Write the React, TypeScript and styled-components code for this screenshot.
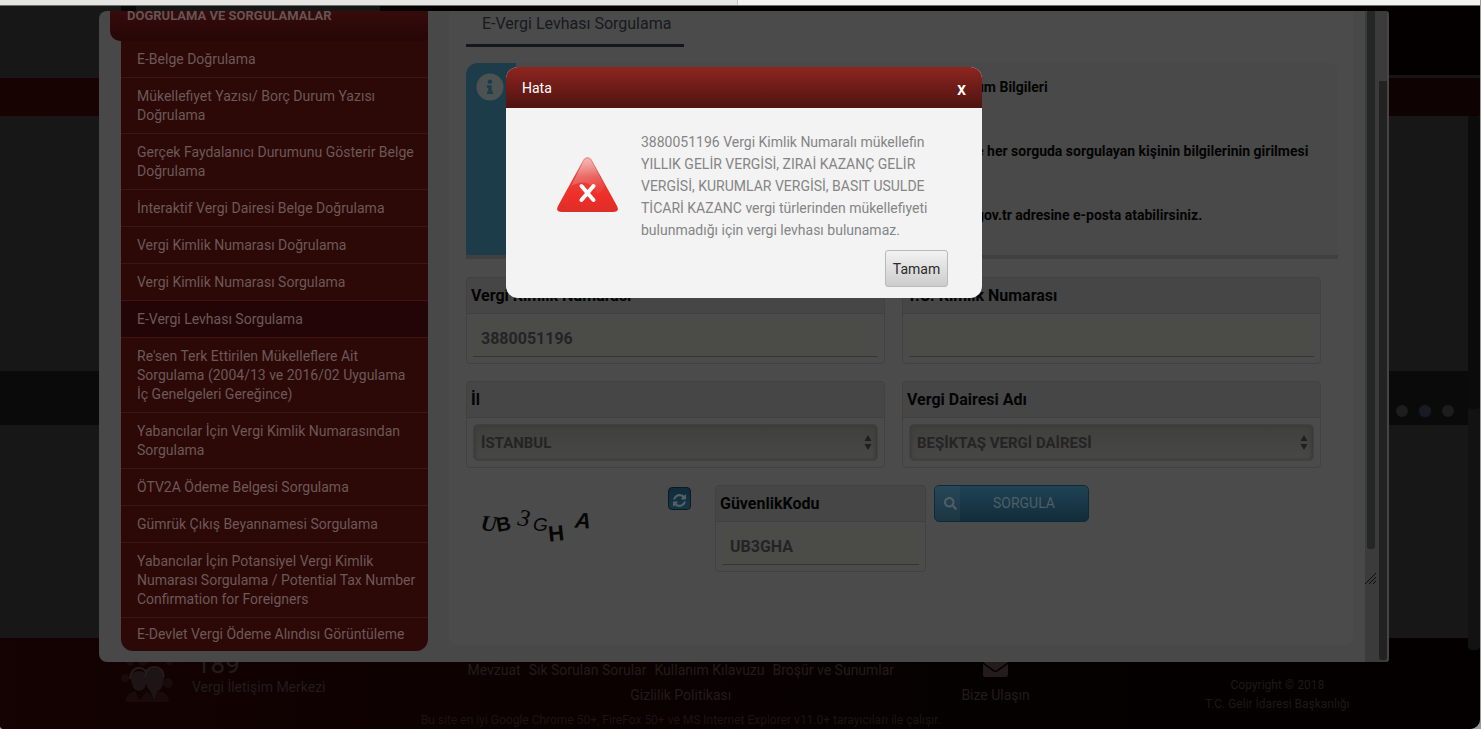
import React from "react";
import styled, { createGlobalStyle, css } from "styled-components";
import { FaEnvelope, FaInfoCircle, FaSearch } from "react-icons/fa";

const GlobalStyle = createGlobalStyle`
  *, *::before, *::after { box-sizing: border-box; }
  body {
    margin: 0;
    background: #9a9a9a;
    font-family: Roboto, "Liberation Sans", sans-serif;
    font-size: 14px;
    color: #000;
  }
  button, input, select { font-family: inherit; }
  h1, h2, p, ul { margin: 0; padding: 0; }
`;

const Page = styled.div`
  position: relative;
  display: flex;
  flex-direction: column;
  min-height: 100vh;
  margin-right: 1px;
  background: #171717;
  border-radius: 0 0 10px 4px;
  overflow: hidden;
`;

/* ---------- site behind the window ---------- */

const BrowserStrip = styled.div`
  display: grid;
  grid-template-columns: 738px 1fr;
  height: 6px;
  flex: none;
  background: #f2f3f0;
  border-bottom: 1px solid #6f6f6d;
`;

const InactiveTab = styled.div`
  background: #e5e5e3;
  border-right: 1px solid #c4c4c2;
`;

const SiteHeader = styled.header`
  display: grid;
  grid-template-columns: 121px 15px 244px 1fr;
  height: 72px;
  flex: none;
`;

const HeaderGap = styled.div`
  background: #070707;
`;

const HeaderLogo = styled.div`
  background: #141716;
`;

const HeaderBar = styled.div`
  background: #050000;
  border-bottom: 3px solid #161414;
`;

const NavBand = styled.div`
  height: 38px;
  flex: none;
  background: linear-gradient(90deg, #180303, #0e0202);
`;

const Hero = styled.div`
  height: 255px;
  flex: none;
`;

const SliderBand = styled.div`
  display: flex;
  justify-content: flex-end;
  align-items: flex-start;
  gap: 11px;
  height: 54px;
  flex: none;
  margin-right: 12px;
  padding: 34px 14px 0 0;
  background: #0a0a0a;
`;

const Dot = styled.span<{ $active?: boolean }>`
  width: 12px;
  height: 12px;
  border-radius: 50%;
  background: ${(p) => (p.$active ? "#1a1b20" : "#1d1d1d")};
  box-shadow: ${(p) => (p.$active ? "0 0 3px 1px #0e0f1c" : "none")};
`;

const Spacer = styled.div`
  flex: 1;
  min-height: 213px;
`;

const Footer = styled.footer`
  display: grid;
  grid-template-columns: 29% 34% 8% 1fr;
  height: 91px;
  flex: none;
  color: #231c1b;
  background: linear-gradient(90deg, #150202, #0c0101 35%, #060101 65%, #040000);
`;

const Contact = styled.div`
  display: flex;
  gap: 19px;
  padding: 14px 0 0 121px;
`;

const ContactNumber = styled.div`
  padding-left: 4px;
  font-size: 26px;
  line-height: 24px;
`;

const ContactName = styled.div`
  line-height: 22px;
`;

const FooterLinks = styled.nav`
  display: flex;
  flex-wrap: wrap;
  justify-content: center;
  align-content: flex-start;
  gap: 0 8px;
  padding-top: 20px;
  white-space: nowrap;
`;

const FooterLink = styled.a`
  color: inherit;
  font-size: 14px;
  line-height: 25px;
  text-decoration: none;
`;

const BrowserNote = styled.p`
  color: #1c1413;
  font-size: 12px;
  line-height: 25px;
`;

const Reach = styled.a`
  display: flex;
  flex-direction: column;
  align-items: center;
  gap: 7px;
  padding: 17px 0 0 8px;
  color: inherit;
  text-decoration: none;
`;

const Copyright = styled.div`
  padding: 38px 0 0 24px;
  font-size: 12px;
  line-height: 19px;
  text-align: center;
  color: #1e1817;
`;

const PageScroll = styled.div`
  position: absolute;
  top: 116px;
  right: 0;
  width: 12px;
  height: 534px;
  background: #121212;
  border-radius: 0 0 4px 4px;
`;

const PageThumb = styled.div`
  height: 293px;
  background: #0b0b0b;
  border-radius: 4px;
`;

/* ---------- application window ---------- */

const WindowLayer = styled.div`
  position: absolute;
  inset: 11px 91px auto 99px;
`;

const Window = styled.div`
  display: flex;
  height: 651px;
  background: #484848;
  border-radius: 8px 4px 4px 8px;
  overflow: hidden;
`;

const Sidebar = styled.aside`
  flex: none;
  width: 329px;
  padding-left: 11px;
`;

const SidebarTitle = styled.h2`
  height: 30px;
  padding-left: 17px;
  background: linear-gradient(#360b0b, #260606);
  border-bottom-left-radius: 10px;
  color: #675454;
  font-size: 13px;
  font-weight: 700;
  line-height: 9px;
`;

const Menu = styled.ul`
  margin-left: 11px;
  list-style: none;
  background: #2c0807;
  border-radius: 0 0 12px 12px;
  overflow: hidden;
`;

const MenuItem = styled.li<{ $active?: boolean }>`
  border-bottom: 1px solid #3d1515;
  background: ${(p) => (p.$active ? "#230507" : "transparent")};

  &:last-child {
    border-bottom: 0;
  }
`;

const MenuLink = styled.a`
  display: block;
  padding: 9px 12px 8px 16px;
  color: #6d5957;
  font-size: 14px;
  line-height: 19px;
  text-decoration: none;

  ${MenuItem}:last-child & {
    padding: 7px 12px 7px 16px;
  }
`;

const Main = styled.main`
  flex: 1;
  min-width: 0;
  margin: 0 12px 17px 21px;
  padding: 0 15px 0 17px;
  background: #4b4b4b;
  border-radius: 0 0 8px 8px;
`;

const Tab = styled.a`
  display: block;
  width: 218px;
  padding: 0 0 7px 16px;
  border-bottom: 3px solid #15171b;
  color: #17191e;
  font-size: 16px;
  line-height: 26px;
  text-decoration: none;
`;

const Info = styled.section`
  display: flex;
  margin-top: 16px;
  height: 196px;
  background: #494949;
  border-bottom: 4px solid #404040;
  border-radius: 12px 12px 0 0;
  overflow: hidden;
`;

const InfoMark = styled.div`
  flex: none;
  width: 50px;
  padding: 10px;
  background: #1d3c4a;
  color: #4c5152;
`;

const InfoText = styled.div`
  flex: 1;
  padding: 13px 0 0 calc(50% + 24px);
  font-size: 14px;
  font-weight: 700;
  line-height: 22px;
  color: #040404;
  white-space: nowrap;
`;

const InfoLine = styled.p`
  margin-bottom: 42px;
`;

const Form = styled.form`
  display: grid;
  grid-template-columns: 1fr 1fr;
  gap: 17px;
  padding: 18px 17px 0 0;
`;

const Field = styled.div`
  height: 87px;
  border: 1px solid #414141;
  border-radius: 4px;
  overflow: hidden;
`;

const FieldLabel = styled.label`
  display: block;
  height: 36px;
  padding-left: 4px;
  background: #464646;
  border-bottom: 1px solid #404040;
  color: #040404;
  font-size: 16px;
  font-weight: 700;
  line-height: 36px;
`;

const FieldBody = styled.div`
  position: relative;
  padding: 6px;
`;

const control = css`
  display: block;
  width: 100%;
  outline: 0;
  color: #242424;
  font-weight: 700;
`;

const TextInput = styled.input`
  ${control}
  height: 37px;
  padding: 0 8px;
  border: 0;
  border-bottom: 1px solid #353537;
  background: #4b4b48;
  font-size: 16px;
`;

const Select = styled.select`
  ${control}
  appearance: none;
  height: 37px;
  padding: 0 7px;
  border: 1px solid #414141;
  border-radius: 5px;
  background: linear-gradient(#3f3f3d, #484846);
  box-shadow: inset 2px 0 3px #3c3c3b, inset -2px 0 3px #3c3c3b;
  font-size: 15px;
`;

const SelectArrows = styled.svg`
  position: absolute;
  top: 17px;
  right: 12px;
  pointer-events: none;
`;

const SecurityRow = styled.div`
  grid-column: 1 / -1;
  display: flex;
  align-items: flex-start;
`;

const Captcha = styled.svg`
  flex: none;
  margin-right: 52px;
`;

const RefreshButton = styled.button`
  display: flex;
  align-items: center;
  justify-content: center;
  width: 23px;
  height: 23px;
  margin: 2px 24px 0 0;
  padding: 3px 0 0;
  border: 1px solid #0b1a22;
  border-radius: 4px;
  background: linear-gradient(#102b3a, #163646);
  color: #566065;
`;

const CodeField = styled(Field)`
  width: 211px;
  margin-right: 8px;
`;

const QueryButton = styled.button`
  display: grid;
  grid-template-columns: 25px 1fr;
  align-items: stretch;
  width: 155px;
  height: 37px;
  padding: 0;
  border: 1px solid #0e2a38;
  border-radius: 5px;
  background: linear-gradient(#1f4354, #122c3a);
  color: #4f5f66;
  font-size: 14px;
  overflow: hidden;
`;

const QueryIcon = styled.span`
  display: flex;
  align-items: center;
  justify-content: center;
  padding-left: 6px;
  background: linear-gradient(#264858, #1c3543);
`;

const QueryText = styled.span`
  line-height: 35px;
`;

const InnerTrack = styled.div`
  flex: none;
  display: flex;
  flex-direction: column;
  width: 14px;
  background: #3b3b3b;
`;

const InnerThumb = styled.div`
  width: 8px;
  height: 538px;
  margin-left: 2px;
  background: #252626;
  border-radius: 0 0 3px 3px;
`;

const ResizeGrip = styled.svg`
  margin-top: 24px;
`;

const OuterTrack = styled.div`
  flex: none;
  width: 10px;
  padding: 70px 0 2px;
  background: #3b3b3b;
  border-right: 2px solid #454545;
`;

const OuterThumb = styled.div`
  height: 100%;
  background: #222;
  border-radius: 0 0 3px 3px;
`;

/* ---------- error dialog ---------- */

const Dialog = styled.div`
  position: absolute;
  top: 56px;
  left: 50%;
  width: 476px;
  margin-left: -238px;
  background: #f3f3f3;
  border-radius: 12px;
  overflow: hidden;
`;

const DialogHeader = styled.div`
  display: flex;
  align-items: center;
  justify-content: space-between;
  height: 41px;
  padding: 0 16px;
  background: linear-gradient(#8e2520, #4e1310);
  color: #fff;
`;

const DialogTitle = styled.h1`
  font-size: 14px;
  font-weight: 400;
`;

const CloseButton = styled.button`
  padding: 2px 0 0;
  border: 0;
  background: none;
  color: #fff;
  font-size: 18px;
  font-weight: 500;
  line-height: 20px;
`;

const DialogBody = styled.div`
  display: grid;
  grid-template-columns: 63px 1fr;
  align-items: center;
  gap: 9px 22px;
  padding: 23px 34px 11px 50px;
`;

const Message = styled.p`
  color: #858585;
  font-size: 14px;
  line-height: 22px;
`;

const OkButton = styled.button`
  grid-column: 2;
  justify-self: end;
  width: 63px;
  height: 37px;
  padding: 0;
  border: 1px solid #b9b9b9;
  border-radius: 3px;
  background: linear-gradient(#f2f2f2, #cccccc);
  color: #2b2b2b;
  font-size: 14px;
`;

const menu = [
  "E-Belge Doğrulama",
  "Mükellefiyet Yazısı/ Borç Durum Yazısı Doğrulama",
  "Gerçek Faydalanıcı Durumunu Gösterir Belge Doğrulama",
  "İnteraktif Vergi Dairesi Belge Doğrulama",
  "Vergi Kimlik Numarası Doğrulama",
  "Vergi Kimlik Numarası Sorgulama",
  "E-Vergi Levhası Sorgulama",
  "Re'sen Terk Ettirilen Mükelleflere Ait Sorgulama (2004/13 ve 2016/02 Uygulama İç Genelgeleri Gereğince)",
  "Yabancılar İçin Vergi Kimlik Numarasından Sorgulama",
  "ÖTV2A Ödeme Belgesi Sorgulama",
  "Gümrük Çıkış Beyannamesi Sorgulama",
  "Yabancılar İçin Potansiyel Vergi Kimlik Numarası Sorgulama / Potential Tax Number Confirmation for Foreigners",
  "E-Devlet Vergi Ödeme Alındısı Görüntüleme",
];

const footerLinks = [
  "Mevzuat",
  "Sık Sorulan Sorular",
  "Kullanım Kılavuzu",
  "Broşür ve Sunumlar",
  "Gizlilik Politikası",
];

const PeopleIcon = () => (
  <svg width="52" height="51" viewBox="0 0 52 51" aria-hidden="true">
    <g fill="#1a0b0b">
      <circle cx="4" cy="26" r="4" />
      <circle cx="47" cy="31" r="5" />
      <circle cx="22" cy="9" r="5" />
      <circle cx="48" cy="10" r="3" />
      <circle cx="9" cy="11" r="3" />
      <path d="M4 50q1-9 10-11l5 9 7-9 7 9 5-9q10 2 10 11z" />
    </g>
    <g fill="#1d1515">
      <path d="M10 27q0-8 8-8t8 8q-1 12-8 12t-8-12z" />
      <path d="M24 26q0-10 9-10t10 10q-1 11-6 13l-4 9-4-9q-4-4-5-13z" />
    </g>
    <path d="M9 27q1-11 9-11 5 0 7 4M24 25q1-10 9-10 9 0 10 10" fill="none" stroke="#241b1b" strokeWidth="2" />
  </svg>
);

const RefreshIcon = () => (
  <svg width="13" height="13" viewBox="0 0 1536 1536" fill="currentColor" aria-hidden="true">
    <path d="M1511 928q0 5-1 7-64 268-268 434.500t-478 166.500q-146 0-282.500-55t-243.500-157l-129 129q-19 19-45 19t-45-19-19-45v-448q0-26 19-45t45-19h448q26 0 45 19t19 45-19 45l-137 137q71 66 161 102t187 36q134 0 250-65t186-179q11-17 53-117 8-23 30-23h192q13 0 22.500 9.500t9.500 22.500zm25-800v448q0 26-19 45t-45 19h-448q-26 0-45-19t-19-45 19-45l138-138q-148-137-349-137-134 0-250 65t-186 179q-11 17-53 117-8 23-30 23h-199q-13 0-22.500-9.500t-9.500-22.500v-7q65-268 270-434.500t480-166.500q146 0 284 55.500t245 156.500l130-129q19-19 45-19t45 19 19 45z" />
  </svg>
);

const ErrorIcon = () => (
  <svg width="63" height="60" viewBox="0 0 63 60" aria-hidden="true">
    <defs>
      <linearGradient id="tri" x1="0" y1="0" x2="0" y2="1">
        <stop offset="0" stopColor="#f0908c" />
        <stop offset="0.35" stopColor="#e5423e" />
        <stop offset="0.7" stopColor="#ef2f28" />
        <stop offset="1" stopColor="#dd2e29" />
      </linearGradient>
      <linearGradient id="gloss" x1="0" y1="0" x2="0.3" y2="1">
        <stop offset="0" stopColor="#fff" stopOpacity="0.45" />
        <stop offset="1" stopColor="#fff" stopOpacity="0.05" />
      </linearGradient>
    </defs>
    <path d="M27.500 3.500q4-5 8 0L61 50q3 6-4 6H6q-7 0-4-6z" fill="url(#tri)" />
    <path d="M28 4.500q3.500-4 7 0L49 30Q46 36 41 38 34 20 15 30z" fill="url(#gloss)" />
    <path d="M25.500 30l12 14M37.500 30l-12 14" stroke="#fff" strokeWidth="4" strokeLinecap="round" />
  </svg>
);

const Arrows = () => (
  <SelectArrows width="8" height="15" viewBox="0 0 8 15" aria-hidden="true">
    <path d="M0.500 6L4 0l3.500 6zM0.500 9h7L4 15z" fill="#1f1f1f" />
  </SelectArrows>
);

export default function App() {
  return (
    <>
      <GlobalStyle />
      <Page>
        <BrowserStrip>
          <InactiveTab />
        </BrowserStrip>
        <SiteHeader>
          <div />
          <HeaderGap />
          <HeaderLogo />
          <HeaderBar />
        </SiteHeader>
        <NavBand />
        <Hero />
        <SliderBand>
          <Dot />
          <Dot $active />
          <Dot />
        </SliderBand>
        <Spacer />
        <Footer>
          <Contact>
            <PeopleIcon />
            <div>
              <ContactNumber>189</ContactNumber>
              <ContactName>Vergi İletişim Merkezi</ContactName>
            </div>
          </Contact>
          <FooterLinks>
            {footerLinks.map((text) => (
              <FooterLink href="#" key={text}>
                {text}
              </FooterLink>
            ))}
            <BrowserNote>
              Bu site en iyi Google Chrome 50+, FireFox 50+ ve MS Internet Explorer v11.0+ tarayıcıları ile çalışır.
            </BrowserNote>
          </FooterLinks>
          <Reach href="#">
            <FaEnvelope size={25} />
            <span>Bize Ulaşın</span>
          </Reach>
          <Copyright>
            Copyright © 2018
            <br />
            T.C. Gelir İdaresi Başkanlığı
          </Copyright>
        </Footer>
        <PageScroll>
          <PageThumb />
        </PageScroll>

        <WindowLayer>
          <Window>
            <Sidebar>
              <SidebarTitle>DOĞRULAMA VE SORGULAMALAR</SidebarTitle>
              <Menu>
                {menu.map((text, i) => (
                  <MenuItem key={text} $active={i === 6}>
                    <MenuLink href="#">{text}</MenuLink>
                  </MenuItem>
                ))}
              </Menu>
            </Sidebar>
            <Main>
              <Tab href="#">E-Vergi Levhası Sorgulama</Tab>
              <Info>
                <InfoMark>
                  <FaInfoCircle size={28} />
                </InfoMark>
                <InfoText>
                  <InfoLine>um Bilgileri</InfoLine>
                  <InfoLine>e her sorguda sorgulayan kişinin bilgilerinin girilmesi</InfoLine>
                  <InfoLine>gov.tr adresine e-posta atabilirsiniz.</InfoLine>
                </InfoText>
              </Info>
              <Form onSubmit={(e) => e.preventDefault()}>
                <Field>
                  <FieldLabel htmlFor="vkn">Vergi Kimlik Numarası</FieldLabel>
                  <FieldBody>
                    <TextInput id="vkn" defaultValue="3880051196" />
                  </FieldBody>
                </Field>
                <Field>
                  <FieldLabel htmlFor="tckn">T.C. Kimlik Numarası</FieldLabel>
                  <FieldBody>
                    <TextInput id="tckn" />
                  </FieldBody>
                </Field>
                <Field>
                  <FieldLabel htmlFor="city">İl</FieldLabel>
                  <FieldBody>
                    <Select id="city">
                      <option>İSTANBUL</option>
                    </Select>
                    <Arrows />
                  </FieldBody>
                </Field>
                <Field>
                  <FieldLabel htmlFor="office">Vergi Dairesi Adı</FieldLabel>
                  <FieldBody>
                    <Select id="office">
                      <option>BEŞİKTAŞ VERGİ DAİRESİ</option>
                    </Select>
                    <Arrows />
                  </FieldBody>
                </Field>
                <SecurityRow>
                  <Captcha width="150" height="70" viewBox="0 0 150 70" fill="#060606">
                    <text x="15" y="46" fontFamily="Liberation Serif, serif" fontWeight="700" fontStyle="italic" fontSize="22" transform="rotate(6 24 38)">U</text>
                    <text x="30" y="46" fontFamily="Liberation Sans, sans-serif" fontWeight="700" fontSize="20" transform="rotate(-10 37 38)">B</text>
                    <text x="52" y="41" fontFamily="Liberation Serif, serif" fontStyle="italic" fontSize="24" transform="rotate(8 58 33)">3</text>
                    <text x="67" y="46" fontFamily="Liberation Sans, sans-serif" fontStyle="italic" fontSize="19">G</text>
                    <text x="82" y="56" fontFamily="Liberation Sans, sans-serif" fontWeight="700" fontSize="22" transform="rotate(-6 90 48)">H</text>
                    <text x="109" y="43" fontFamily="Liberation Sans, sans-serif" fontWeight="700" fontStyle="italic" fontSize="22" transform="rotate(4 117 36)">A</text>
                  </Captcha>
                  <RefreshButton type="button" aria-label="Yenile">
                    <RefreshIcon />
                  </RefreshButton>
                  <CodeField>
                    <FieldLabel htmlFor="code">GüvenlikKodu</FieldLabel>
                    <FieldBody>
                      <TextInput id="code" defaultValue="UB3GHA" />
                    </FieldBody>
                  </CodeField>
                  <QueryButton type="submit">
                    <QueryIcon>
                      <FaSearch size={13} />
                    </QueryIcon>
                    <QueryText>SORGULA</QueryText>
                  </QueryButton>
                </SecurityRow>
              </Form>
            </Main>
            <InnerTrack>
              <InnerThumb />
              <ResizeGrip width="12" height="12" viewBox="0 0 12 12" aria-hidden="true">
                <path d="M0 11L11 0M4 11l7-7M8 11l3-3" stroke="#0c0c0c" fill="none" />
              </ResizeGrip>
            </InnerTrack>
            <OuterTrack>
              <OuterThumb />
            </OuterTrack>
          </Window>

          <Dialog role="dialog" aria-labelledby="dialog-title">
            <DialogHeader>
              <DialogTitle id="dialog-title">Hata</DialogTitle>
              <CloseButton type="button">x</CloseButton>
            </DialogHeader>
            <DialogBody>
              <ErrorIcon />
              <Message>
                3880051196 Vergi Kimlik Numaralı mükellefin YILLIK GELİR VERGİSİ, ZIRAİ KAZANÇ GELİR VERGİSİ,
                KURUMLAR VERGİSİ, BASIT USULDE TİCARİ KAZANC vergi türlerinden mükellefiyeti bulunmadığı için
                vergi levhası bulunamaz.
              </Message>
              <OkButton type="button">Tamam</OkButton>
            </DialogBody>
          </Dialog>
        </WindowLayer>
      </Page>
    </>
  );
}
